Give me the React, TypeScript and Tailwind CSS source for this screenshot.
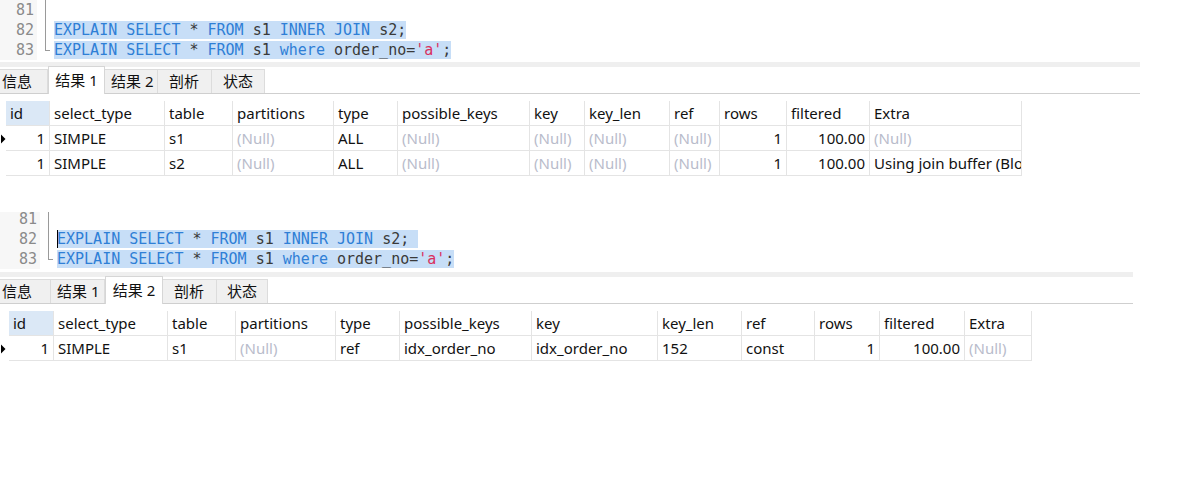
import React from "react";

type Col = { name: string; w: number; right?: boolean };
type Cell = string | null;

const mono = "font-['DejaVu_Sans_Mono','Liberation_Mono',monospace]";
const sans = "font-['Noto_Sans','Noto_Sans_CJK_SC',sans-serif]";

const KW = ({ children }: { children: React.ReactNode }) => (
  <span className="text-[#2f7fd6]">{children}</span>
);
const Tx = ({ children }: { children: React.ReactNode }) => (
  <span className="text-[#3a3a3a]">{children}</span>
);

const Line82 = ({ tail }: { tail?: boolean }) => (
  <span className="bg-[#c7def7]">
    <KW>EXPLAIN SELECT</KW> <Tx>*</Tx> <KW>FROM</KW> <Tx>s1</Tx> <KW>INNER JOIN</KW> <Tx>s2;</Tx>
    {tail ? " " : ""}
  </span>
);

const Line83 = () => (
  <span className="bg-[#c7def7]">
    <KW>EXPLAIN SELECT</KW> <Tx>*</Tx> <KW>FROM</KW> <Tx>s1</Tx> <KW>where</KW> <Tx>order_no=</Tx>
    <span className="text-[#d9305e]">'a'</span>
    <Tx>;</Tx>
  </span>
);

const Editor = ({
  gutterW,
  foldX,
  codeX,
  shift,
  height,
  cursor,
}: {
  gutterW: number;
  foldX: number;
  codeX: number;
  shift: number;
  height: number;
  cursor?: boolean;
}) => (
  <div className={`relative overflow-hidden ${mono} text-[15px]`} style={{ height }}>
    <div className="flex" style={{ marginTop: shift }}>
      <div className="bg-[#f7f7f7] text-[#8a8a8a] text-right pr-[3px]" style={{ width: gutterW }}>
        <div className="h-5 leading-5">81</div>
        <div className="h-5 leading-5">82</div>
        <div className="h-5 leading-5">83</div>
      </div>
      <div className="relative" style={{ width: codeX - gutterW }}>
        <div
          className="absolute top-0 w-[5px] h-[51px] border-l border-b border-[#9a9a9a]"
          style={{ left: foldX - gutterW }}
        />
      </div>
      <div className="relative whitespace-pre">
        <div className="h-5 leading-5"> </div>
        <div className="h-5 leading-5">
          <Line82 tail={cursor} />
        </div>
        <div className="h-5 leading-5">
          <Line83 />
        </div>
        {cursor && <div className="absolute left-0 top-[21px] w-px h-[18px] bg-black" />}
      </div>
    </div>
  </div>
);

const Tabs = ({ widths, active, lineW }: { widths: number[]; active: number; lineW: number }) => {
  const labels = ["信息", "结果 1", "结果 2", "剖析", "状态"];
  return (
    <div className="relative" style={{ width: lineW }}>
      <div className="h-[27px] flex items-end border-b border-[#cfcfcf]">
        {labels.map((l, i) =>
          i === active ? (
            <div
              key={l}
              className="h-[28px] -mb-px bg-white border-x border-t border-[#d6d6d6] flex items-center justify-center text-[#111] z-10"
              style={{ width: widths[i] }}
            >
              {l}
            </div>
          ) : (
            <div
              key={l}
              className="h-[24px] bg-[#f0f0f0] border-r border-t border-[#dcdcdc] flex items-center text-[#111]"
              style={{ width: widths[i], paddingLeft: i === 0 ? 2 : Math.round((widths[i] - 32 - (l.length > 2 ? 10 : 0)) / 2) }}
            >
              {l}
            </div>
          )
        )}
      </div>
    </div>
  );
};

const Grid = ({ left, cols, rows }: { left: number; cols: Col[]; rows: Cell[][] }) => (
  <div className="flex">
    <div className="relative" style={{ width: left }}>
      <svg className="absolute left-0" style={{ top: 33 }} width="6" height="10" viewBox="0 0 6 10">
        <path d="M1 0.5 L5.5 5 L1 9.5 Z" fill="#000" />
      </svg>
    </div>
    <div className="flex flex-col">
      <div className="flex h-[25px] border-b border-[#e4e4e4]">
        {cols.map((c, i) => (
          <div
            key={c.name}
            className={`px-[4px] leading-[25px] border-r border-[#e4e4e4] text-[#111] whitespace-nowrap overflow-hidden ${i === 0 ? "bg-[#dbe8f6]" : ""}`}
            style={{ width: c.w }}
          >
            {c.name}
          </div>
        ))}
      </div>
      {rows.map((r, ri) => (
        <div key={ri} className="flex h-[25px] border-b border-[#e4e4e4]">
          {cols.map((c, ci) => (
            <div
              key={c.name}
              className={`px-[4px] leading-[24px] border-r border-[#e4e4e4] whitespace-nowrap overflow-hidden ${c.right ? "text-right" : ""} ${r[ci] === null ? "text-[#b9bccb]" : "text-[#111]"}`}
              style={{ width: c.w }}
            >
              {r[ci] === null ? "(Null)" : r[ci]}
            </div>
          ))}
        </div>
      ))}
    </div>
  </div>
);

const names = ["id", "select_type", "table", "partitions", "type", "possible_keys", "key", "key_len", "ref", "rows", "filtered", "Extra"];
const rightCols = ["id", "rows", "filtered"];
const mkCols = (ws: number[]): Col[] => names.map((n, i) => ({ name: n, w: ws[i], right: rightCols.includes(n) }));

const cols1 = mkCols([44, 115, 68, 101, 64, 132, 55, 85, 50, 67, 83, 152]);
const cols2 = mkCols([45, 114, 68, 100, 64, 132, 126, 84, 73, 65, 85, 67]);

const rows1: Cell[][] = [
  ["1", "SIMPLE", "s1", null, "ALL", null, null, null, null, "1", "100.00", null],
  ["1", "SIMPLE", "s2", null, "ALL", null, null, null, null, "1", "100.00", "Using join buffer (Block Nested Loop)"],
];
const rows2: Cell[][] = [["1", "SIMPLE", "s1", null, "ref", "idx_order_no", "idx_order_no", "152", "const", "1", "100.00", null]];

export default function App() {
  return (
    <div className={`w-[1182px] h-[480px] bg-white overflow-hidden ${sans} text-[15px]`}>
      <Editor gutterW={37} foldX={45} codeX={54} shift={0} height={62} />
      <div className="w-[1140px] h-[5px] bg-[#efefef]" />
      <Tabs widths={[48, 57, 53, 54, 53]} active={1} lineW={1140} />
      <div className="h-[7px]" />
      <Grid left={6} cols={cols1} rows={rows1} />

      <div className="h-[36px]" />
      <Editor gutterW={40} foldX={48} codeX={57} shift={-3} height={60} cursor />
      <div className="w-[1133px] h-[5px] bg-[#efefef]" />
      <Tabs widths={[51, 54, 58, 54, 51]} active={2} lineW={1133} />
      <div className="h-[7px]" />
      <Grid left={9} cols={cols2} rows={rows2} />
    </div>
  );
}
